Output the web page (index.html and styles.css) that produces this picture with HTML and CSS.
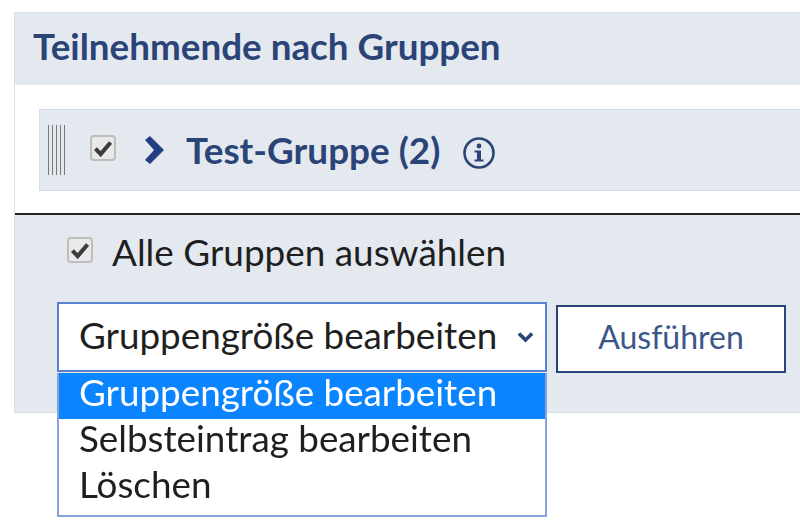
FILE: index.html
```html
<!DOCTYPE html>
<html lang="de">
<head>
  <meta charset="UTF-8">
  <title>Teilnehmende nach Gruppen</title>
  <link rel="stylesheet" href="styles.css">
</head>
<body>

<section class="panel">
  <h2 class="panel-head">Teilnehmende nach Gruppen</h2>

  <div class="panel-body">
    <div class="group-row">
      <span class="grip"></span>
      <span class="check check-row">
        <svg viewBox="0 0 16 16"><path d="M2.5 8.5 L6.3 12.5 L13.5 4" fill="none" stroke="#3c3c3c" stroke-width="3"/></svg>
      </span>
      <svg class="chevron" viewBox="0 0 22 30"><path d="M2 5 L7 1 L21 15 L7 29 L2 25 L11 15 Z" fill="#223f86"/></svg>
      <span class="group-name">Test-Gruppe (2)</span>
      <svg class="info" viewBox="0 0 34 34">
        <circle cx="17" cy="17" r="14.5" fill="none" stroke="#2b4478" stroke-width="2.6"/>
        <circle cx="17" cy="10" r="2.4" fill="#2b4478"/>
        <path d="M12.5 14.5 H19 V23.5 H21.5 V25.5 H12.5 V23.5 H15 V16.5 H12.5 Z" fill="#2b4478"/>
      </svg>
    </div>
  </div>

  <div class="panel-foot">
    <label class="select-all">
      <span class="check check-all">
        <svg viewBox="0 0 16 16"><path d="M2.5 8.5 L6.3 12.5 L13.5 4" fill="none" stroke="#3c3c3c" stroke-width="3"/></svg>
      </span>
      Alle Gruppen auswählen
    </label>

    <div class="actions">
      <div class="dropdown">
        <div class="select-box">
          <span>Gruppengröße bearbeiten</span>
          <svg class="caret" viewBox="0 0 14 10"><path d="M1.5 2 L7 7.5 L12.5 2" fill="none" stroke="#2b4478" stroke-width="3"/></svg>
        </div>
        <ul class="options">
          <li class="selected">Gruppengröße bearbeiten</li>
          <li>Selbsteintrag bearbeiten</li>
          <li>Löschen</li>
        </ul>
      </div>
      <button class="run" type="button">Ausführen</button>
    </div>
  </div>
</section>

</body>
</html>
```

FILE: styles.css
```css
html, body {
  height: 100%;
}

body {
  margin: 0;
  background-color: #fff;
  font-family: Lato, "Open Sans", sans-serif;
  color: #1f1f1f;
}

.panel {
  margin: 12px 0 0 14px;
  border: 1px solid #d9dfec;
  border-right: none;
  filter: blur(0.7px);
}

.panel-head {
  margin: 0;
  height: 72px;
  padding: 0 0 0 18px;
  background-color: #e4e9f0;
  color: #2b4478;
  font-size: 36.8px;
  font-weight: 700;
  line-height: 66px;
}

.panel-body {
  height: 130px;
  padding: 24px 0 0 24px;
  box-sizing: border-box;
  background-color: #fff;
  border-bottom: 2px solid #222;
}

.group-row {
  display: flex;
  align-items: center;
  height: 82px;
  box-sizing: border-box;
  padding-left: 8px;
  background-color: #e4e9f0;
  border: 1px solid #d5dcea;
  border-right: none;
}

.grip {
  width: 17px;
  height: 50px;
  background-image: repeating-linear-gradient(to right, #777 0, #777 1px, transparent 1px, transparent 4px);
}

.check {
  display: block;
  box-sizing: border-box;
  background-color: #e9e9e9;
  border: 2px solid #bdbdbd;
  border-radius: 4px;
}

.check svg {
  display: block;
  width: 100%;
  height: 100%;
}

.check-row {
  width: 26px;
  height: 26px;
  margin: 0 27px 4px 25px;
}

.chevron {
  width: 22px;
  height: 30px;
  margin-right: 21px;
}

.group-name {
  color: #2b4478;
  font-size: 36.9px;
  font-weight: 700;
  line-height: 1;
}

.info {
  width: 34px;
  height: 34px;
  margin: 6px 0 0 22px;
}

.panel-foot {
  height: 197px;
  box-sizing: border-box;
  padding: 19px 0 0 42px;
  background-color: #e4e9f0;
}

.select-all {
  display: flex;
  align-items: center;
  font-size: 36.9px;
  line-height: 36px;
}

.check-all {
  width: 26px;
  height: 26px;
  margin: 0 19px 4px 10px;
}

.actions {
  display: flex;
  align-items: flex-start;
  margin-top: 32px;
}

.dropdown {
  position: relative;
  width: 490px;
}

.select-box {
  display: flex;
  align-items: center;
  justify-content: space-between;
  height: 70px;
  box-sizing: border-box;
  padding: 0 11px 5px 20px;
  background-color: #fff;
  border: 2px solid #5b80cf;
  font-size: 36.8px;
}

.caret {
  width: 17px;
  height: 12px;
  margin-top: 5px;
}

.options {
  position: absolute;
  top: 71px;
  left: 0;
  width: 100%;
  box-sizing: border-box;
  margin: 0;
  padding: 0 0 4px;
  list-style: none;
  background-color: #fff;
  border: 2px solid #88a3dc;
  border-top: none;
  font-size: 36.8px;
  line-height: 39px;
}

.options li {
  padding: 0 0 7px 20px;
}

.options .selected {
  background-color: #0a84ff;
  color: #fff;
}

.run {
  width: 230px;
  height: 68px;
  margin: 3px 0 0 9px;
  padding: 0 0 6px;
  background-color: #fff;
  border: 2px solid #2b4478;
  color: #3d5688;
  font-family: inherit;
  font-size: 32px;
}
```
